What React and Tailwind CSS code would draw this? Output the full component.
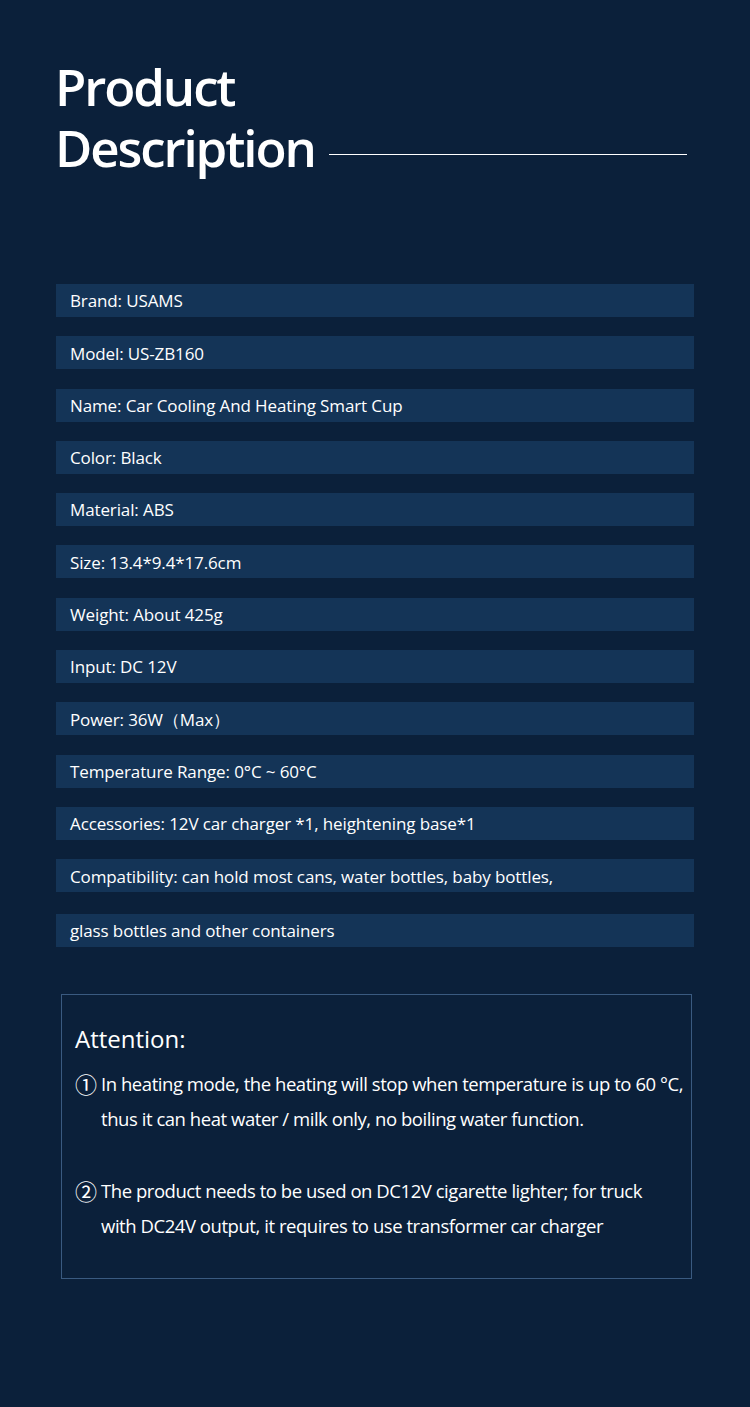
import React from 'react';

const specs = [
  'Brand: USAMS',
  'Model: US-ZB160',
  'Name: Car Cooling And Heating Smart Cup',
  'Color: Black',
  'Material: ABS',
  'Size: 13.4*9.4*17.6cm',
  'Weight: About 425g',
  'Input: DC 12V',
  'Power: 36W（Max）',
  'Temperature Range: 0°C ~ 60°C',
  'Accessories: 12V car charger *1, heightening base*1',
  'Compatibility: can hold most cans, water bottles, baby bottles,',
];

const font = { fontFamily: '"Open Sans", "Noto Sans", sans-serif' };
const cjk = { fontFamily: '"Noto Sans CJK SC", sans-serif' };

const App = () => {
  return (
    <div className="w-[750px] min-h-[1407px] bg-[#0b203a] text-white" style={font}>
      {/* Heading */}
      <div className="pl-[55px] pr-[63px] pt-[56px]">
        <h1 className="text-[51px] leading-[61px] font-semibold tracking-[-2.1px]">
          Product
        </h1>
        <div className="flex items-center">
          <h1 className="text-[51px] leading-[61px] font-semibold tracking-[-2.1px]">Description</h1>
          <div className="ml-[14px] mt-[14px] flex-1 h-px bg-white" />
        </div>
      </div>

      {/* Spec rows */}
      <div className="mt-[106px] mx-[56px] flex flex-col gap-[19.3px]">
        {specs.map((s) => (
          <div key={s} className="h-[33px] bg-[#143457] flex items-center pl-[14px] pt-px text-[17px] tracking-[-0.12px]">
            {s}
          </div>
        ))}
        <div className="mt-[2px] h-[33px] bg-[#143457] flex items-center pl-[14px] pt-px text-[17px] tracking-[-0.12px]">
          glass bottles and other containers
        </div>
      </div>

      {/* Attention box */}
      <div className="mt-[47px] ml-[61px] w-[631px] h-[285px] border border-[#3a5a80] pl-[13px] pt-[26px]">
        <div className="text-[24px] leading-[36px]">Attention:</div>
        <div className="mt-[9px] flex text-[18.5px] leading-[35px] tracking-[-0.45px]">
          <span className="w-[26px] shrink-0 text-[22px] leading-[35px]" style={cjk}>①</span>
          <span>
            In heating mode, the heating will stop when temperature is up to 60 °C,
            <br />
            thus it can heat water / milk only, no boiling water function.
          </span>
        </div>
        <div className="mt-[37px] flex text-[18.5px] leading-[35px] tracking-[-0.45px]">
          <span className="w-[26px] shrink-0 text-[22px] leading-[35px]" style={cjk}>②</span>
          <span>
            The product needs to be used on DC12V cigarette lighter; for truck
            <br />
            with DC24V output, it requires to use transformer car charger
          </span>
        </div>
      </div>
    </div>
  );
};

export default App;
